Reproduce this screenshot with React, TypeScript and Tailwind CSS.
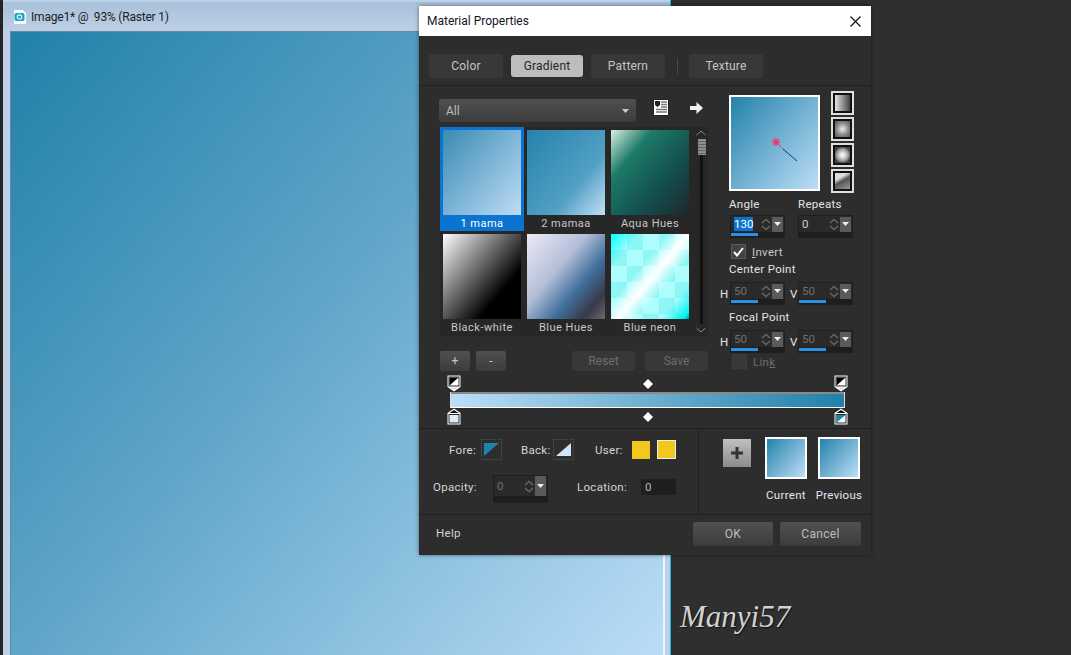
const font = { fontFamily: 'Roboto, "Noto Sans", sans-serif' };

function Tab({ label, active, className = "" }: { label: string; active?: boolean; className?: string }) {
  return (
    <div
      className={`flex items-center justify-center rounded-[3px] text-[12px] tracking-[0.2px] ${
        active ? "h-[22px] w-[72px] bg-[#bdbdbd] text-[#262626]" : "h-[24px] w-[74px] bg-[#383838] text-[#c4c4c4]"
      } ${className}`}
    >
      {label}
    </div>
  );
}

function Thumb({ label, bg, selected }: { label: string; bg: string; selected?: boolean }) {
  return (
    <div className={`flex h-[104px] w-[84px] flex-col items-center pt-[3px] ${selected ? "bg-[#0a74d0] text-white" : "text-[#c8c8c8]"}`}>
      <div className={`h-[85px] w-[78px] shrink-0 ${bg}`} />
      <div className="pt-px text-[11px] leading-[16px] tracking-[0.5px]">{label}</div>
    </div>
  );
}

function Spinner({ value, dim, blue = true, sel, tall }: { value: string; dim?: boolean; blue?: boolean; sel?: boolean; tall?: boolean }) {
  return (
    <div className={`flex ${tall ? "h-[28px]" : "h-[23px]"} w-[55px] flex-col bg-[#1e1e1e] p-px`}>
      <div className={`flex ${tall ? "h-[20px]" : "h-[16px]"} items-center bg-[#2a2a2a]`}>
        <div className={`flex-1 pl-[3px] pt-px text-[11.5px] leading-[15px] tracking-normal ${dim ? "text-[#6f6f6f]" : "text-[#cfcfcf]"}`}>
          <span className={sel ? "bg-[#0a74d0] text-white" : ""}>{value}</span>
        </div>
        <svg width="12" height="15" viewBox="0 0 12 15" className="shrink-0">
          <path d="M2 6 L6 2.5 L10 6 M2 9 L6 12.5 L10 9" fill="none" stroke="#666" strokeWidth="1.6" />
        </svg>
        <div className={`mr-px flex ${tall ? "h-[20px]" : "h-[15px]"} w-[11px] items-center justify-center bg-[#5a5a5a]`}>
          <svg width="7" height="4" viewBox="0 0 7 4"><path d="M0 0H7L3.5 4Z" fill="#eee" /></svg>
        </div>
      </div>
      <div className="mt-[1px] h-[3px] w-[27px] bg-[#2f8fe3]" style={{ opacity: blue ? 1 : 0 }} />
    </div>
  );
}

function Check({ checked, disabled }: { checked?: boolean; disabled?: boolean }) {
  return (
    <div className={`flex h-[15px] w-[15px] items-center justify-center border ${disabled ? "border-[#3c3c3c] bg-[#383838]" : "border-[#5a5a5a] bg-[#434343]"}`}>
      {checked && (
        <svg width="11" height="10" viewBox="0 0 11 10">
          <path d="M1 5 L4 8.5 L10 1" fill="none" stroke="#fff" strokeWidth="2" />
        </svg>
      )}
    </div>
  );
}

function StyleBtn({ bg }: { bg: string }) {
  return (
    <div className="h-[24px] w-[23px] border-2 border-[#dedede] bg-[#111] p-[2px]">
      <div className={`h-full w-full ${bg}`} />
    </div>
  );
}

function MarkerTop() {
  return (
    <svg width="14" height="17" viewBox="0 0 14 17">
      <path d="M0.5 0.5H13.5V12L7 16.5L0.5 12Z" fill="#fff" />
      <rect x="1.5" y="1.5" width="11" height="10" fill="#2d2d2d" />
      <rect x="2.5" y="2.5" width="9" height="8" fill="#fff" />
      <path d="M2.5 2.5H11.5L2.5 10.5Z" fill="#000" />
      <path d="M3.5 12.5L7 15L10.5 12.5Z" fill="#ddd" />
    </svg>
  );
}

function MarkerBottom({ fill, tri }: { fill: string; tri?: string }) {
  return (
    <svg width="14" height="17" viewBox="0 0 14 17">
      <path d="M7 0.5L13.5 5V16.5H0.5V5Z" fill="#fff" />
      <path d="M7 2L11.5 5H2.5Z" fill="#111" />
      <rect x="1.5" y="6" width="11" height="9.5" fill="#2d2d2d" />
      <rect x="2.5" y="7" width="9" height="7.5" fill={fill} />
      {tri && <path d={tri} fill="#1f84a8" />}
    </svg>
  );
}

function Diamond() {
  return (
    <svg width="10" height="10" viewBox="0 0 10 10"><path d="M5 0L10 5L5 10L0 5Z" fill="#fff" /></svg>
  );
}

function Swatch({ triangle }: { triangle: "fore" | "back" }) {
  return (
    <div className="flex h-[21px] w-[21px] items-center justify-center border border-dotted border-[#555]">
      <svg width="15" height="13" viewBox="0 0 15 13">
        {triangle === "fore" ? <path d="M0 0H15L0 13Z" fill="#1f84ab" /> : <path d="M15 0V13H0Z" fill="#cfe5fa" />}
      </svg>
    </div>
  );
}

const btnDark = "bg-[linear-gradient(#505050,#3c3c3c)]";

export default function App() {
  return (
    <div className="relative h-[655px] w-[1071px] overflow-hidden bg-[#2f2f2f]" style={font}>
      {/* image window */}
      <div className="flex h-[655px] w-[671px] flex-col border-l-[3px] border-r border-l-[#252525] border-r-[#1fb6e6] bg-[#bcd2e8] pt-[2px]">
        <div className="flex h-[29px] shrink-0 items-center gap-[5px] bg-[linear-gradient(#a9c0da,#bcd0e6)] pl-[11px] text-[#1b1b1b]">
          <svg width="12" height="14" viewBox="0 0 12 14">
            <path d="M0 0H9L12 3V14H0Z" fill="#f4f8fb" />
            <rect x="0.5" y="3" width="10" height="8" rx="2" fill="#14a5c4" />
            <circle cx="5.5" cy="7" r="2.2" fill="none" stroke="#eaf8fb" strokeWidth="1.2" />
          </svg>
          <span className="text-[12px] tracking-[-0.2px] whitespace-pre">Image1* @  93% (Raster 1)</span>
        </div>
        <div className="flex min-h-0 flex-1 pl-[7px] pr-[5px]">
          <div className="h-full flex-1 border-r-2 border-r-[#eef5fb] bg-[linear-gradient(130deg,#2180a9_0%,#5fa5c8_45%,#bbddf7_100%)] shadow-[inset_0_1px_0_#6f8598,inset_1px_0_0_#6f8598]" />
        </div>
      </div>

      {/* signature */}
      <div className="absolute left-[680px] top-[598px] text-[31px] italic leading-[38px] text-[#d2d2d2] [text-shadow:1px_1px_1px_#111]" style={{ fontFamily: '"Liberation Serif", serif' }}>
        Manyi57
      </div>

      {/* dialog */}
      <div className="absolute left-[419px] top-[6px] flex h-[549px] w-[452px] flex-col bg-[#2d2d2d] text-[#d4d4d4] shadow-[0_0_4px_rgba(0,0,0,0.5)]">
        <div className="flex h-[30px] shrink-0 items-center justify-between bg-white pl-[8px] pr-[10px] text-[12px] text-[#15151f]">
          <span>Material Properties</span>
          <svg width="11" height="11" viewBox="0 0 11 11"><path d="M0.5 0.5L10.5 10.5M10.5 0.5L0.5 10.5" stroke="#111" strokeWidth="1.2" /></svg>
        </div>

        <div className="flex h-[50px] shrink-0 items-center gap-[8px] border-b border-b-[#1f1f1f] pl-[10px] pt-[10px]">
          <Tab label="Color" />
          <Tab label="Gradient" active />
          <Tab label="Pattern" />
          <div className="ml-[4px] mr-[3px] h-[16px] w-px bg-[#484848]" />
          <Tab label="Texture" />
        </div>

        <div className="flex h-[342px] shrink-0 flex-col">
          <div className="flex h-[306px] shrink-0">
            {/* left */}
            <div className="flex w-[301px] shrink-0 flex-col pl-[20px] pt-[13px]">
              <div className="flex items-center">
                <div className={`flex h-[23px] w-[197px] items-center justify-between rounded-[2px] px-[7px] pt-px text-[12px] text-[#bdbdbd] ${btnDark}`}>
                  <span>All</span>
                  <svg width="7" height="4" viewBox="0 0 7 4"><path d="M0 0H7L3.5 4Z" fill="#ccc" /></svg>
                </div>
                <svg width="16" height="17" viewBox="0 0 16 17" className="-mt-[6px] ml-[17px]">
                  <path d="M0.5 0.5H15.5V16.5H0.5Z" fill="#fff" stroke="#222" />
                  <path d="M2 2H7V6L4.5 8L2 6Z" fill="#222" />
                  <path d="M8 3H14M8 5.5H14M8 8H14M3 10.5H14M3 13H14" stroke="#777" strokeWidth="1.3" />
                </svg>
                <svg width="13" height="12" viewBox="0 0 13 12" className="-mt-[6px] ml-[21px]">
                  <path d="M0 4H6.5V0L13 6L6.5 12V8H0Z" fill="#f2f2f2" />
                </svg>
              </div>

              <div className="ml-px mt-[5px] flex h-[209px] w-[268px] bg-[#272727]">
                <div className="grid w-[252px] shrink-0 grid-cols-[84px_84px_84px] content-start">
                  <Thumb selected label="1 mama" bg="bg-[linear-gradient(130deg,#3a8bb3,#bedcf6)]" />
                  <Thumb label="2 mamaa" bg="bg-[linear-gradient(130deg,#2682ab,#52a0c4_65%,#c3e0f6)]" />
                  <Thumb label="Aqua Hues" bg="bg-[linear-gradient(130deg,#d8efe4,#1d7a68_28%,#134f4c_65%,#1d2830)]" />
                  <Thumb label="Black-white" bg="bg-[linear-gradient(130deg,#fff,#000_72%)]" />
                  <Thumb label="Blue Hues" bg="bg-[linear-gradient(130deg,#ecebf7,#b4bed8_40%,#3f6f9c_65%,#393848_85%,#6a6a6a)]" />
                  <Thumb label="Blue neon" bg="[background:linear-gradient(130deg,#00ffff_0%,rgba(0,255,255,0)_20%,rgba(255,255,255,0)_38%,#fff_52%,rgba(255,255,255,0)_66%,rgba(0,255,255,0)_80%,#00f2f2_96%,#0a8a8a_100%),repeating-conic-gradient(#8ff6f6_0_25%,#aefdfd_0_50%)_0_0/32px_32px]" />
                </div>
                <div className="ml-[4px] flex w-[10px] flex-col items-center py-[3px]">
                  <svg width="10" height="6" viewBox="0 0 10 6"><path d="M0.5 5L5 1L9.5 5" fill="none" stroke="#8a8a8a" /></svg>
                  <div className="mt-[3px] flex w-[3px] flex-1 flex-col bg-[#111]">
                    <div className="-ml-[2px] h-[16px] w-[8px] shrink-0 bg-[repeating-linear-gradient(#8e8e8e_0_2px,#666_2px_3px)]" />
                  </div>
                  <svg width="10" height="6" viewBox="0 0 10 6" className="mt-[3px]"><path d="M0.5 1L5 5L9.5 1" fill="none" stroke="#8a8a8a" /></svg>
                </div>
              </div>

              <div className="ml-px mt-[15px] flex items-center text-[12px]">
                <div className={`flex h-[20px] w-[30px] items-center justify-center rounded-[2px] text-[#c8c8c8] ${btnDark}`}>+</div>
                <div className={`ml-[6px] flex h-[20px] w-[30px] items-center justify-center rounded-[2px] text-[#c8c8c8] ${btnDark}`}>-</div>
                <div className="ml-[66px] flex h-[20px] w-[63px] items-center justify-center rounded-[2px] bg-[#383838] text-[#6e6e6e]">Reset</div>
                <div className="ml-[10px] flex h-[20px] w-[63px] items-center justify-center rounded-[2px] bg-[#383838] text-[#6e6e6e]">Save</div>
              </div>
            </div>

            {/* right */}
            <div className="flex flex-1 flex-col text-[11.5px] leading-[14px] tracking-[0.3px]">
              <div className="flex pl-[9px] pt-[5px]">
                <div className="relative mt-[4px] h-[96px] w-[91px] border-2 border-white bg-[linear-gradient(130deg,#2482ab,#bcdef7)]">
                  <svg width="40" height="40" viewBox="0 0 40 40" className="absolute left-[40px] top-[39px]">
                    <path d="M5 6L12 13" stroke="#e8356a" strokeWidth="0.8" />
                    <path d="M12 13L26 25" stroke="#123a66" strokeWidth="1" />
                    <path d="M5 2V10M1 6H9M2 3L8 9M8 3L2 9" stroke="#ee3a6c" strokeWidth="1.4" />
                  </svg>
                </div>
                <div className="ml-[11px] flex flex-col gap-[2px]">
                  <StyleBtn bg="bg-[linear-gradient(90deg,#e4e4e4,#444)]" />
                  <StyleBtn bg="bg-[radial-gradient(circle,#e4e4e4_5%,#8a8a8a_55%,#555)]" />
                  <StyleBtn bg="bg-[radial-gradient(circle,#eee_15%,#999_55%,#444_75%)]" />
                  <StyleBtn bg="bg-[linear-gradient(150deg,#ddd_30%,#555_50%,#999)]" />
                </div>
              </div>

              <div className="mt-[3px] flex pl-[9px] leading-[16px] text-[#e4e4e4]">
                <span className="w-[69px]">Angle</span><span>Repeats</span>
              </div>
              <div className="mt-[3px] flex pl-[10px]">
                <Spinner value="130" sel />
                <div className="w-[13px]" />
                <Spinner value="0" blue={false} />
              </div>
              <div className="mt-[6px] flex items-center pl-[11px]">
                <Check checked />
                <span className="ml-[6px] text-[#c8c8c8]"><u>I</u>nvert</span>
              </div>
              <div className="mt-[2px] pl-[9px] leading-[16px] text-[#e4e4e4]">Center Point</div>
              <div className="mt-[5px] flex items-center">
                <span className="w-[10px] text-[#e4e4e4]">H</span>
                <Spinner value="50" dim />
                <span className="ml-[5px] w-[8px] text-[#e4e4e4]">V</span>
                <Spinner value="50" dim />
              </div>
              <div className="mt-[4px] pl-[9px] leading-[16px] text-[#e4e4e4]">Focal Point</div>
              <div className="mt-[5px] flex items-center">
                <span className="w-[10px] text-[#e4e4e4]">H</span>
                <Spinner value="50" dim />
                <span className="ml-[5px] w-[8px] text-[#e4e4e4]">V</span>
                <Spinner value="50" dim />
              </div>
              <div className="mt-[1px] flex items-center pl-[12px]">
                <Check disabled />
                <span className="ml-[6px] text-[#6e6e6e]">Lin<u>k</u></span>
              </div>
            </div>
          </div>

          {/* gradient editor */}
          <div className="-mt-[17px] w-[429px] self-start pl-[28px]">
            <div className="flex h-[17px] items-center justify-between">
              <MarkerTop />
              <Diamond />
              <MarkerTop />
            </div>
            <div className="mx-[4px] h-[16px] border-b border-t-2 border-b-white border-t-[#8a8a8a] bg-[linear-gradient(90deg,#bcdef7,#2180a9)] shadow-[-1px_0_0_#ddd,1px_0_0_#ddd]" />
            <div className="flex h-[17px] items-center justify-between">
              <MarkerBottom fill="#dcecfa" />
              <Diamond />
              <MarkerBottom fill="#f4f8fb" tri="M2.5 7H11.5L2.5 14.5Z" />
            </div>
          </div>
        </div>

        {/* bottom */}
        <div className="flex h-[87px] shrink-0 border-b border-t border-b-[#1f1f1f] border-t-[#1f1f1f] text-[11.5px] leading-[14px] tracking-[0.3px]">
          <div className="flex w-[280px] shrink-0 flex-col border-r border-r-[#1f1f1f] pl-[14px]">
            <div className="flex h-[34px] items-center pl-[16px] pt-[7px]">
              <span className="w-[32px]">Fore:</span>
              <Swatch triangle="fore" />
              <span className="ml-[19px] w-[32px]">Back:</span>
              <Swatch triangle="back" />
              <span className="ml-[21px] w-[37px]">User:</span>
              <div className="h-[18px] w-[18px] bg-[#f2c81f]" />
              <div className="ml-[7px] h-[19px] w-[19px] border border-[#eee] bg-[#f2c81f]" />
            </div>
            <div className="mt-[12px] flex items-start">
              <span className="mt-[5px] w-[60px]">Opacity:</span>
              <Spinner value="0" dim blue={false} tall />
              <span className="ml-[29px] mt-[5px] w-[64px]">Location:</span>
              <div className="mt-[4px] flex h-[16px] w-[35px] items-center bg-[#1f1f1f] pl-[4px] text-[#b8b8b8]">0</div>
            </div>
          </div>
          <div className="flex flex-1 pl-[24px] pt-[8px]">
            <div className="mt-[2px] flex h-[28px] w-[28px] items-center justify-center bg-[linear-gradient(#c0c0c0,#8c8c8c)]">
              <svg width="14" height="14" viewBox="0 0 14 14"><path d="M7 1V13M1 7H13" stroke="#333" strokeWidth="3" /></svg>
            </div>
            <div className="ml-[14px] flex w-[42px] flex-col items-center">
              <div className="h-[42px] w-[42px] shrink-0 border-2 border-white bg-[linear-gradient(130deg,#2482ab,#bcdef7)]" />
              <span className="mt-[9px] whitespace-nowrap text-[#e0e8f0]">Current</span>
            </div>
            <div className="ml-[11px] flex w-[42px] flex-col items-center">
              <div className="h-[42px] w-[42px] shrink-0 border-2 border-white bg-[linear-gradient(130deg,#2482ab,#bcdef7)]" />
              <span className="mt-[9px] whitespace-nowrap text-[#e0e8f0]">Previous</span>
            </div>
          </div>
        </div>

        <div className="flex flex-1 items-center justify-between pb-[3px] pl-[17px] pr-[10px] text-[11.5px] tracking-[0.3px]">
          <span>Help</span>
          <div className="flex gap-[7px] text-[12px] text-[#bdbdbd]">
            <div className={`flex h-[24px] w-[80px] items-center justify-center rounded-[2px] ${btnDark}`}>OK</div>
            <div className={`flex h-[24px] w-[81px] items-center justify-center rounded-[2px] ${btnDark}`}>Cancel</div>
          </div>
        </div>
      </div>
    </div>
  );
}
